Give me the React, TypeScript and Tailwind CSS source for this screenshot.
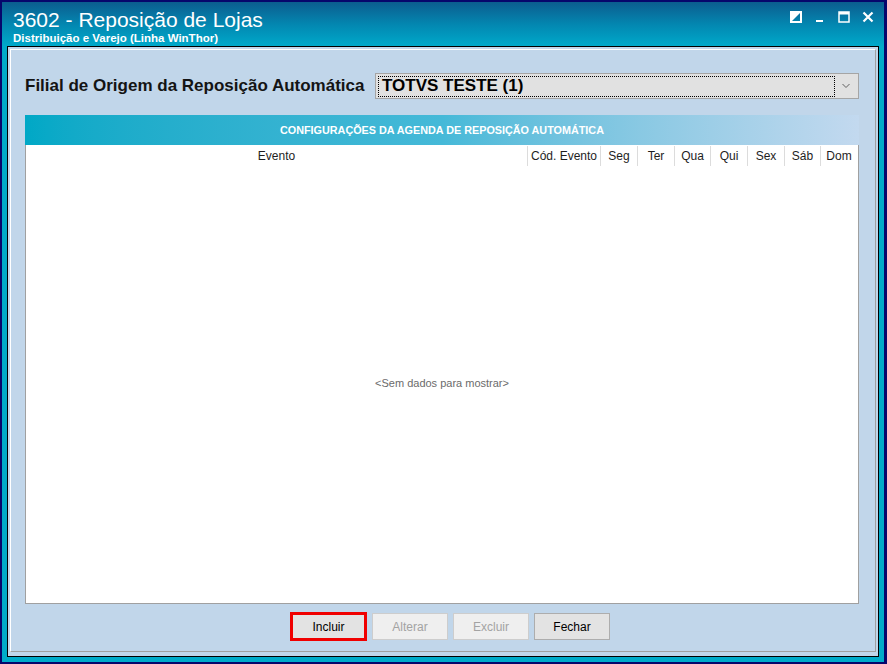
import React from 'react';

const columns = ['Cód. Evento', 'Seg', 'Ter', 'Qua', 'Qui', 'Sex', 'Sáb', 'Dom'];
const widths = ['w-[73px]', 'w-[37px]', 'w-[37px]', 'w-[36px]', 'w-[37px]', 'w-[37px]', 'w-[36px]', 'w-[37px]'];

const TitleBar: React.FC = () => (
  <div className="flex h-[44px] flex-col bg-gradient-to-b from-[#0b5d8f] via-[#0386b0] to-[#00a9ca]">
    <div className="flex flex-1 items-start justify-between pl-[11px] pr-[10px]">
      <div className="pt-[6px] text-white">
        <div className="text-[21px] leading-[23px]">3602 - Reposição de Lojas</div>
        <div className="text-[11.5px] font-bold leading-[15px]">Distribuição e Varejo (Linha WinThor)</div>
      </div>
      <div className="flex items-center gap-[12px] pt-[9px]">
        {/* janela: alternar */}
        <svg width="12" height="12" viewBox="0 0 12 12">
          <rect x="1" y="1" width="10" height="10" fill="none" stroke="white" strokeWidth="2" />
          <polygon points="1,1 11,1 1,11" fill="white" />
        </svg>
        {/* minimizar */}
        <svg width="12" height="12" viewBox="0 0 12 12">
          <rect x="2" y="9" width="7" height="2" fill="white" />
        </svg>
        {/* maximizar */}
        <svg width="12" height="12" viewBox="0 0 12 12">
          <rect x="1" y="1" width="10" height="10" fill="none" stroke="white" strokeWidth="1.5" />
          <rect x="1" y="1" width="10" height="2.5" fill="white" />
        </svg>
        {/* fechar */}
        <svg width="12" height="12" viewBox="0 0 12 12">
          <path d="M1.5 1.5 L10.5 10.5 M10.5 1.5 L1.5 10.5" stroke="white" strokeWidth="2.2" />
        </svg>
      </div>
    </div>
    <div className="flex h-[2px] justify-end">
      <div className="w-[329px] bg-[#f0a020]" />
    </div>
  </div>
);

export default function App() {
  return (
    <div className="h-[664px] w-[887px] bg-[#06066c] pb-[2px] pl-[2px] pr-[3px] pt-[2px] font-['Liberation_Sans',Arial,sans-serif]">
      <div className="flex h-full flex-col bg-[#00abc9]">
        <TitleBar />
        <div className="mx-[5px] mb-[5px] flex-1 border border-black bg-[#c1d6ea] pb-[4px] pl-[2px] pr-[2px] pt-[2px]">
          <div className="flex h-full flex-col border border-b-[#a0a0a0] border-l-white border-r-[#a0a0a0] border-t-white pl-[14px] pr-[16px] pt-[23px]">
            {/* filial */}
            <div className="flex h-[26px] items-center">
              <span className="w-[350px] text-[17px] font-bold text-[#141414]">Filial de Origem da Reposição Automática</span>
              <div className="flex h-[26px] flex-1 items-center border border-[#a5a5a5] bg-[#e1e1e1] pl-[2px] pr-[4px]">
                <div className="flex h-[21px] flex-1 items-center border border-dotted border-black pl-[3px]">
                  <span className="text-[17px] font-bold text-black">TOTVS TESTE (1)</span>
                </div>
                <svg width="16" height="10" viewBox="0 0 16 10" className="ml-[3px]">
                  <path d="M4.5 3 L8 6.5 L11.5 3" fill="none" stroke="#606060" strokeWidth="1" />
                </svg>
              </div>
            </div>

            {/* titulo da grade */}
            <div className="mt-[16px] flex h-[30px] items-center justify-center bg-gradient-to-r from-[#00a8c6] via-[#45b9d8] to-[#c3d9ef]">
              <span className="text-[10.8px] font-bold text-white">CONFIGURAÇÕES DA AGENDA DE REPOSIÇÃO AUTOMÁTICA</span>
            </div>

            {/* grade */}
            <div className="flex h-[459px] flex-col border border-t-0 border-[#a0a0a0] bg-white">
              <div className="flex h-[21px] pr-[1px] pt-[1px] text-[12px] text-[#1e1e1e]">
                <div className="flex flex-1 items-center justify-center">Evento</div>
                {columns.map((c, i) => (
                  <div key={c} className={`${widths[i]} flex items-center justify-center border-l border-[#dcdcdc]`}>
                    {c}
                  </div>
                ))}
              </div>
              <div className="flex flex-1 items-center justify-center pb-[2px] text-[11px] text-[#6b6b6b]">
                &lt;Sem dados para mostrar&gt;
              </div>
            </div>

            {/* botoes */}
            <div className="mt-[8px] flex items-center gap-[5px] pl-[265px] text-[12px]">
              <div className="flex h-[29px] w-[77px] items-center justify-center border-[3px] border-[#f00000] bg-[#e3e3e3] text-black">
                Incluir
              </div>
              <div className="flex h-[27px] w-[76px] items-center justify-center border border-[#cdcdcd] bg-[#efefef] text-[#a3a3a3]">
                Alterar
              </div>
              <div className="flex h-[27px] w-[76px] items-center justify-center border border-[#cdcdcd] bg-[#efefef] text-[#a3a3a3]">
                Excluir
              </div>
              <div className="flex h-[27px] w-[76px] items-center justify-center border border-[#adadad] bg-[#e3e3e3] text-black">
                Fechar
              </div>
            </div>
          </div>
        </div>
      </div>
    </div>
  );
}
